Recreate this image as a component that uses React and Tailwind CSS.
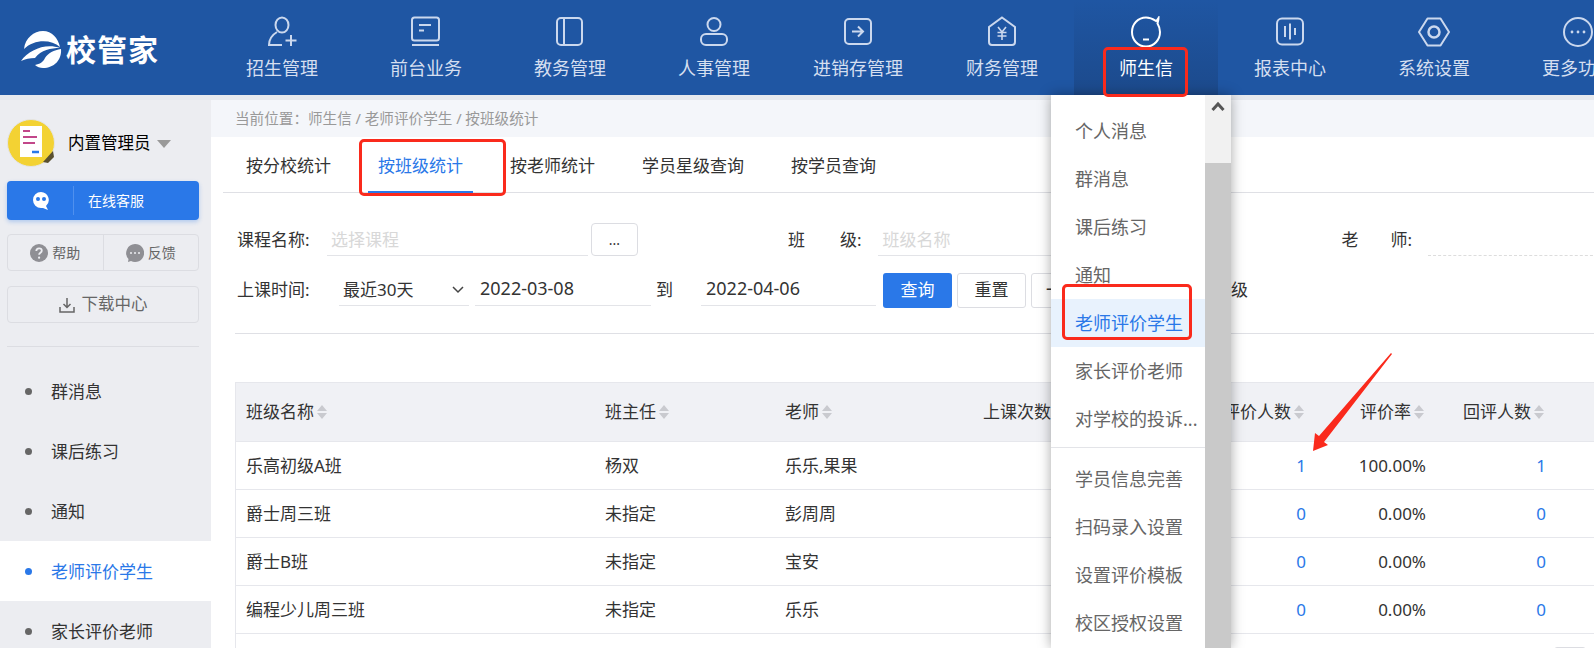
import React from 'react'

const nav = [
  { name: '招生管理', icon: <g><ellipse cx="16" cy="9" rx="6.500" ry="7.500" /><path d="M11 16c-5 3-8 8-8 13h13" /><path d="M25 19v11M19.500 24.500h11" /></g> },
  { name: '前台业务', icon: <g><rect x="2" y="1.500" width="27" height="23" rx="2.500" /><path d="M9 9h12M9 14.500h5" /><path d="M2 29h27" /></g> },
  { name: '教务管理', icon: <g><rect x="3" y="2" width="25" height="27" rx="4" /><path d="M10 2v27" /></g> },
  { name: '人事管理', icon: <g><circle cx="16" cy="8.500" r="6.500" /><rect x="3" y="18" width="26" height="11" rx="5" /></g> },
  { name: '进销存管理', icon: <g><rect x="3" y="3" width="26" height="25" rx="4" /><path d="M10 15.500h11M16 10.500l5 5-5 5" /></g> },
  { name: '财务管理', icon: <g><path d="M16 1.500 29 11v15a3 3 0 0 1-3 3H6a3 3 0 0 1-3-3V11z" /><path d="m12 11 4 5 4-5M11.500 16.500h9M11.500 20h9M16 16v8" strokeWidth="1.600" /></g> },
  { name: '师生信', active: true, icon: <g stroke="#fff" transform="translate(0 1)"><path d="M26 4c-3-2-6-3.500-10-3.500C8 .5 2 7 2 15s6 14.500 14 14.500S30 23 30 15c0-3-1-6-2.500-8.500C28 4.500 28.500 3 28.500 1c-1 1.500-1.500 2.500-2.500 3Z" /><path d="M13 22.500h6" /></g> },
  { name: '报表中心', icon: <g><rect x="3" y="2.500" width="26" height="26" rx="5" /><path d="M11 10v11M16 7.500v16M21 12v7" /></g> },
  { name: '系统设置', icon: <g><path d="M9.500 2.500h13L31 16l-8.500 13.500h-13L1 16z" strokeLinejoin="round" /><circle cx="16" cy="16" r="5.500" strokeWidth="2.500" /></g> },
  { name: '更多功能', icon: <g><circle cx="16" cy="16" r="14" /><path d="M10 16h.01M16 16h.01M22 16h.01" strokeWidth="2.800" strokeLinecap="round" /></g> },
]

const menu1 = ['个人消息', '群消息', '课后练习', '通知', '老师评价学生', '家长评价老师', '对学校的投诉...']
const menu2 = ['学员信息完善', '扫码录入设置', '设置评价模板', '校区授权设置']
const side = ['群消息', '课后练习', '通知', '老师评价学生', '家长评价老师']
const tabs = ['按分校统计', '按班级统计', '按老师统计', '学员星级查询', '按学员查询']

const rows = [
  ['乐高初级A班', '杨双', '乐乐,果果', '1', '100.00%', '1'],
  ['爵士周三班', '未指定', '彭周周', '0', '0.00%', '0'],
  ['爵士B班', '未指定', '宝安', '0', '0.00%', '0'],
  ['编程少儿周三班', '未指定', '乐乐', '0', '0.00%', '0'],
]

const Sort = () => (
  <svg width="12" height="16" viewBox="0 0 12 16" className="ml-[2px] shrink-0" fill="#c9cacf">
    <path d="M6 1 11 7H1zM1 9h10l-5 6z" />
  </svg>
)

const Head = ({ children, right }) => (
  <div className={`flex items-center h-full whitespace-nowrap ${right ? 'justify-end pr-[11px]' : 'pl-[10px]'}`}>
    {children}
    <Sort />
  </div>
)

const RedBox = ({ className }) => (
  <div className={`absolute border-[3px] border-[#fa2a1c] rounded-[5px] ${className}`} />
)

const Logo = () => (
  <div className="w-[210px] shrink-0 flex items-center pl-[21px] pt-[4px]">
    <svg width="41" height="40" viewBox="0 0 41 40" fill="#fff">
      <path d="M3 19C4 8 13 1 22 1c9 0 15 7 17 16C30 9 13 9 3 19Z" />
      <path d="M0 31C8 20 24 13 39 18c-9 0-19 2-25 10-5 0-10 1-14 3Z" />
      <path d="M40 19C41 30 33 38 22 38c-3 0-6-1-8-3 5-1 8-3 10-7 3-5 9-8 16-9Z" />
    </svg>
    <span className="text-[30px] font-bold text-white ml-[4px] leading-none tracking-[1px]">校管家</span>
  </div>
)

const Avatar = () => (
  <svg width="48" height="48" viewBox="0 0 48 48" className="shrink-0">
    <circle cx="24" cy="24" r="23.500" fill="#f3d233" stroke="#e4e4e4" />
    <path d="M36 43 46 32l1 6-6 6z" fill="#5a5030" />
    <rect x="13" y="7" width="22" height="31" fill="#fff" />
    <path d="M16 12h7M16 18h14M16 24h12" stroke="#c2478a" strokeWidth="2" />
    <path d="M25 33h7" stroke="#2a78e8" strokeWidth="2.500" />
  </svg>
)

export default function App() {
  return (
    <div className="relative w-[1594px] h-[648px] overflow-hidden flex flex-col bg-white text-[#333] font-['Noto_Sans','Noto_Sans_CJK_SC',sans-serif]">
      <header className="h-[95px] shrink-0 flex bg-[#1f56a3]">
        <Logo />
        {nav.map((n) => (
          <div
            key={n.name}
            className={`w-[144px] shrink-0 flex flex-col items-center pt-[16px] ${n.active ? 'bg-gradient-to-b from-[#1f56a3] to-[#1c4a8c] text-white' : 'text-[#d5dff0]'}`}
          >
            <svg width="32" height="32" viewBox="0 0 32 32" fill="none" stroke="#cbd8ee" strokeWidth="2">
              {n.icon}
            </svg>
            <span className="text-[18px] leading-[24px] mt-[8px] whitespace-nowrap">{n.name}</span>
          </div>
        ))}
      </header>

      <div className="flex flex-1 min-h-0 bg-[#e6e9ee]">
        <aside className="w-[211px] shrink-0 bg-[#ecedf1] mt-[5px] pt-[19px]">
          <div className="flex items-center pl-[7px]">
            <Avatar />
            <span className="ml-[13px] text-[16.500px] text-black">内置管理员</span>
            <span className="ml-[6px] mt-[2px] border-x-[7px] border-x-transparent border-t-[8px] border-t-[#999]" />
          </div>
          <div className="ml-[7px] w-[192px] mt-[14px] h-[39px] bg-[#2a78e8] rounded-[4px] shadow-[0_2px_4px_rgba(42,120,232,0.3)] flex items-center text-white text-[14px]">
            <div className="w-[67px] h-[29px] border-r border-r-[#4f90ee] flex items-center justify-center pl-[2px]">
              <svg width="18" height="20" viewBox="0 0 18 20" fill="#fff">
                <path d="M9 1a8 8 0 1 0 0 16h2l5 2-2-4a8 8 0 0 0-5-14Z" />
                <circle cx="6" cy="8" r="2" fill="#2a78e8" />
                <circle cx="12" cy="8" r="2" fill="#2a78e8" />
              </svg>
            </div>
            <span className="ml-[14px]">在线客服</span>
          </div>
          <div className="ml-[7px] w-[192px] mt-[14px] h-[37px] border border-[#dcdde2] rounded-[4px] flex text-[14px] text-[#666]">
            <div className="flex-1 flex items-center justify-center gap-[4px] border-r border-r-[#dcdde2]">
              <svg width="18" height="18" viewBox="0 0 18 18">
                <circle cx="9" cy="9" r="9" fill="#8f8f94" />
                <path d="M6.300 7c0-1.700 1.200-2.600 2.800-2.600 1.500 0 2.700.9 2.700 2.300 0 2-2.700 2-2.700 4" fill="none" stroke="#ecedf1" strokeWidth="1.800" />
                <circle cx="9.100" cy="13.700" r="1.100" fill="#ecedf1" />
              </svg>
              帮助
            </div>
            <div className="flex-1 flex items-center justify-center gap-[4px]">
              <svg width="18" height="18" viewBox="0 0 18 18">
                <path d="M9 0a9 9 0 1 1-4 17l-3 1 .5-3A9 9 0 0 1 9 0Z" fill="#8f8f94" />
                <path d="M5 9h.01M9 9h.01M13 9h.01" stroke="#ecedf1" strokeWidth="2" strokeLinecap="round" />
              </svg>
              反馈
            </div>
          </div>
          <div className="ml-[7px] w-[192px] mt-[15px] h-[37px] border border-[#dcdde2] rounded-[4px] flex items-center justify-center gap-[7px] text-[16.500px] text-[#666]">
            <svg width="16" height="16" viewBox="0 0 16 16" fill="none" stroke="#666" strokeWidth="1.500">
              <path d="M8 1v9M4.500 7 8 10.500 11.500 7M1 10v5h14v-5" />
            </svg>
            下载中心
          </div>
          <div className="ml-[7px] w-[192px] mt-[23px] border-t border-t-[#dcdde2]" />
          <ul className="mt-[14px]">
            {side.map((s) => {
              const on = s === '老师评价学生'
              return (
                <li key={s} className={`h-[60px] flex items-center pl-[25px] text-[17px] ${on ? 'bg-white text-[#2a78e8]' : 'text-[#333]'}`}>
                  <span className={`w-[7px] h-[7px] rounded-full ${on ? 'bg-[#2a78e8]' : 'bg-[#666]'}`} />
                  <span className="ml-[19px] pt-[2px]">{s}</span>
                </li>
              )
            })}
          </ul>
        </aside>

        <main className="flex-1 min-w-0 mt-[5px] bg-white overflow-hidden">
          <div className="h-[37px] bg-[#f4f6fa] pl-[24px] flex items-center text-[14.600px] text-[#999]">
            当前位置：师生信 / 老师评价学生 / 按班级统计
          </div>

          <div className="ml-[12px] h-[56px] border-b border-b-[#dfe0e5] flex gap-[27px] text-[17px]">
            {tabs.map((t) => {
              const on = t === '按班级统计'
              return (
                <div key={t} className={`px-[10px] pt-[16px] h-[56px] whitespace-nowrap border-b-[2px] ${on ? 'text-[#2a78e8] border-b-[#2a78e8]' : 'text-[#333] border-b-transparent'} ${t === '按分校统计' ? 'ml-[13px]' : ''}`}>
                  {t}
                </div>
              )
            })}
          </div>

          <div className="pl-[26px] pt-[30px] text-[17px] text-[#333]">
            <div className="flex h-[33px] items-center [&>*]:shrink-0">
              <span className="w-[90px]">课程名称:</span>
              <div className="w-[261px] h-[33px] border-b border-b-[#e3e4e8] pl-[4px] pt-[4px] text-[#d8d8d8]">选择课程</div>
              <button className="ml-[3px] w-[47px] h-[33px] border border-[#dcdde2] rounded-[4px] text-[14px] leading-none">...</button>
              <span className="ml-[150px]">班</span>
              <span className="ml-[35px]">级:</span>
              <div className="ml-[16px] w-[200px] h-[33px] border-b border-b-[#e3e4e8] pl-[5px] pt-[4px] text-[#d8d8d8]">班级名称</div>
              <span className="ml-[264px]">老</span>
              <span className="ml-[32px]">师:</span>
              <div className="ml-[16px] w-[170px] h-[33px] border-b border-dashed border-b-[#ddd]" />
            </div>
            <div className="flex h-[36px] items-center mt-[16px] [&>*]:shrink-0">
              <span className="w-[102px]">上课时间:</span>
              <div className="w-[130px] h-[32px] border-b border-b-[#e3e4e8] flex items-center justify-between pl-[4px] pr-[5px]">
                最近30天
                <svg width="12" height="8" viewBox="0 0 12 8" fill="none" stroke="#444" strokeWidth="1.500"><path d="m1 1 5 5 5-5" /></svg>
              </div>
              <div className="ml-[6px] w-[176px] h-[32px] border-b border-b-[#e3e4e8] pl-[5px] pb-[2px] flex items-center text-[18px]">2022-03-08</div>
              <span className="ml-[5px] w-[45px]">到</span>
              <div className="w-[175px] h-[32px] border-b border-b-[#e3e4e8] pl-[5px] pb-[2px] flex items-center text-[18px]">2022-04-06</div>
              <button className="ml-[7px] w-[69px] h-[35px] bg-[#2a78e8] text-white rounded-[3px]">查询</button>
              <button className="ml-[5px] w-[69px] h-[35px] border border-[#dcdde2] rounded-[3px]">重置</button>
              <button className="ml-[5px] w-[100px] h-[35px] border border-[#dcdde2] rounded-[3px] text-left pl-[14px]">一键</button>
              <span className="ml-[100px]">级</span>
            </div>
          </div>

          <div className="ml-[24px] mt-[25px] border-t border-t-[#dfe0e5]" />

          <div className="ml-[24px] mt-[48px] text-[17px] border-l border-l-[#e6e7ec]">
            <div className="grid grid-cols-[359px_180px_180px_121px_136px_104px_120px_120px_1fr] h-[60px] bg-[#f0f1f5] border-y border-y-[#e6e7ec]">
              <Head>班级名称</Head>
              <Head>班主任</Head>
              <Head>老师</Head>
              <Head right>上课次数</Head>
              <div />
              <Head right>评价人数</Head>
              <Head right>评价率</Head>
              <Head right>回评人数</Head>
            </div>
            {rows.map((r) => (
              <div key={r[0]} className="grid grid-cols-[359px_180px_180px_121px_136px_104px_120px_120px_1fr] h-[48px] items-center border-b border-b-[#e6e7ec]">
                <div className="pl-[10px]">{r[0]}</div>
                <div className="px-[10px]">{r[1]}</div>
                <div className="px-[10px]">{r[2]}</div>
                <div className="px-[10px] text-right whitespace-nowrap col-start-6 text-[#2a78e8]">{r[3]}</div>
                <div className="px-[10px] text-right">{r[4]}</div>
                <div className="px-[10px] text-right text-[#2a78e8]">{r[5]}</div>
              </div>
            ))}
            <div className="flex justify-end mt-[13px] pr-[8px]">
              <div className="w-[32px] h-[20px] border border-[#dcdde2] rounded-[3px]" />
            </div>
          </div>
        </main>
      </div>

      {/* dropdown under 师生信 */}
      <div className="absolute left-[1051px] top-[95px] w-[180px] h-[553px] flex bg-white shadow-[0_0_12px_rgba(0,0,0,0.35)] text-[18px] text-[#666]">
        <div className="w-[154px] pt-[12px]">
          {menu1.map((m) => (
            <div key={m} className={`h-[48px] flex items-center pl-[24px] whitespace-nowrap ${m === '老师评价学生' ? 'bg-[#e8f2fd] text-[#2a78e8]' : ''}`}>{m}</div>
          ))}
          <div className="mt-[4px] border-t border-t-[#e3e4e8]" />
          <div className="mt-[7px]">
            {menu2.map((m) => (
              <div key={m} className="h-[48px] flex items-center pl-[24px] whitespace-nowrap">{m}</div>
            ))}
          </div>
        </div>
        <div className="w-[26px] flex flex-col">
          <div className="h-[68px] bg-[#f1f1f1] flex justify-center pt-[6px]">
            <svg width="14" height="11" viewBox="0 0 14 11" fill="none" stroke="#555" strokeWidth="3"><path d="m1.500 9 5.500-6 5.500 6" /></svg>
          </div>
          <div className="flex-1 bg-[#c9c9c9]" />
        </div>
      </div>

      {/* annotations drawn on top of the screenshot */}
      <RedBox className="left-[1103px] top-[47px] w-[85px] h-[50px]" />
      <RedBox className="left-[359px] top-[139px] w-[147px] h-[57px]" />
      <RedBox className="left-[1062px] top-[284px] w-[130px] h-[56px]" />
      <svg className="absolute left-[1300px] top-[350px]" width="100" height="105" viewBox="1300 350 100 105" fill="#fa2a1c">
        <polygon points="1392,354 1324,442 1328,445 1313,451 1315,433 1319,436 1391,353" />
      </svg>
    </div>
  )
}
